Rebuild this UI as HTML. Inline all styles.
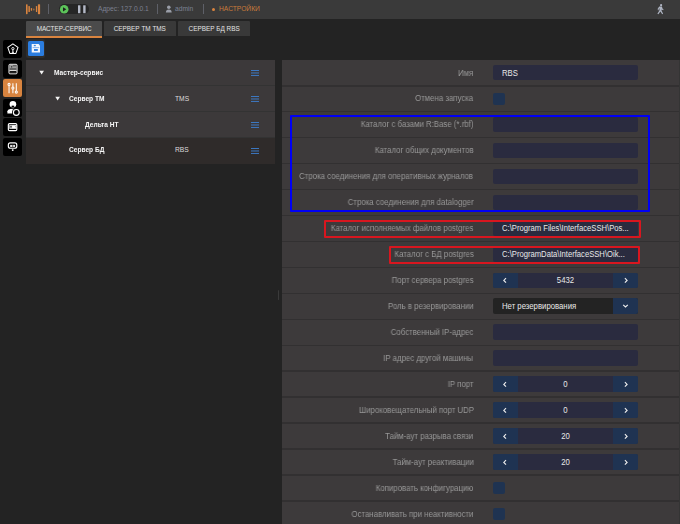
<!DOCTYPE html><html><head><meta charset="utf-8"><style>
*{margin:0;padding:0;box-sizing:border-box}
html,body{width:680px;height:524px;overflow:hidden;background:#232323;font-family:"Liberation Sans",sans-serif}
.a{position:absolute}
#hdr{left:0;top:0;width:680px;height:19px;background:#3a3a3a}
.sep{width:1px;background:#5e6068;top:4px;height:10px}
.htx{font-size:6.7px;line-height:19px;top:-1px;white-space:nowrap}
.tab{top:21px;height:15px;font-size:6.4px;line-height:15px;color:#e4e4e4;text-align:center;border-radius:1px 1px 0 0;white-space:nowrap}
.sb{left:2.5px;width:19.5px;height:18px;background:#000;border-radius:2px}
.sb svg{position:absolute;left:0;top:0}
.tr{left:26px;width:248.5px;height:26px;background:#3c3c3c}
.tt{font-size:6.6px;font-weight:bold;color:#f6f6f6;white-space:nowrap;will-change:transform}
.tv{font-size:6.7px;color:#dcdcdc;white-space:nowrap}
.ham{width:8px;height:6px}
.row{left:282px;width:397px;background:#3d3a3b}
.rs{left:282px;width:397px;height:1.5px;background:#323031}
.lb{right:206.5px;font-size:8.4px;color:#989898;will-change:transform;white-space:nowrap;text-align:right;transform:scaleX(0.935);transform-origin:100% 50%}
.inp{left:493px;width:145px;height:15.5px;background:#2a2b3f;border-radius:2px}
.val{font-size:8.3px;color:#e8e8e8;white-space:nowrap;transform:scaleX(0.935);transform-origin:0 50%}
.chk{left:493px;width:11.6px;height:11.7px;background:#1f3351;border-radius:2px}
.btn{width:25px;height:15.5px;background:#1f3352}
</style></head><body>
<div id="hdr" class="a"></div>
<svg class="a" style="left:24px;top:2px" width="18" height="14" viewBox="0 0 18 14">
<g fill="#d9843f">
<rect x="2" y="2.2" width="1.6" height="10" rx="0.6"/>
<rect x="4.4" y="4" width="1.5" height="6.1" rx="0.6"/>
<rect x="6.8" y="5.9" width="1.3" height="2.9" rx="0.6"/>
<rect x="9" y="6.4" width="1.6" height="2" rx="0.6" opacity="0.6"/>
<rect x="11.9" y="4" width="1.3" height="6.1" rx="0.6"/>
<rect x="13.9" y="2.2" width="2.2" height="10" rx="0.6"/>
</g></svg>
<div class="a sep" style="left:48px"></div>
<div class="a" style="left:58.5px;top:4px;width:30.8px;height:10.2px;border-radius:5.1px;background:#262626"></div>
<svg class="a" style="left:58px;top:3px" width="32" height="12" viewBox="0 0 32 12"><circle cx="6.2" cy="6.3" r="4.3" fill="#5cc35a"/><path d="M5 4.2 L8.3 6.3 L5 8.4 Z" fill="#1e1e1e"/><rect x="20" y="2.3" width="2.4" height="7.9" fill="#b3b8c6"/><rect x="25.2" y="2.3" width="2.4" height="7.9" fill="#b3b8c6"/></svg>
<div class="a htx" style="left:98px;color:#7c8090">Адрес: 127.0.0.1</div>
<div class="a sep" style="left:157px"></div>
<svg class="a" style="left:165px;top:5px" width="8" height="9" viewBox="0 0 8 9"><circle cx="3.8" cy="2.3" r="1.8" fill="#9a9ea8"/><path d="M0.9 7.6 Q0.9 4.6 3.8 4.6 Q6.7 4.6 6.7 7.6 Z" fill="#9a9ea8"/></svg>
<div class="a htx" style="left:175px;color:#7c8496">admin</div>
<div class="a sep" style="left:203px"></div>
<div class="a" style="left:212.3px;top:7.8px;width:3px;height:3px;border-radius:50%;background:#d9843f"></div>
<div class="a htx" style="left:219px;color:#c97a3b">НАСТРОЙКИ</div>
<svg class="a" style="left:655px;top:3px" width="10" height="13" viewBox="0 0 10 13"><g fill="#aeb4c2"><circle cx="6.1" cy="2.2" r="1.1"/><path d="M4.3 3.5 L6.9 3.5 L7.5 5.6 L8.6 6.5 L8.1 7.2 L6.7 6.4 L6.5 7.6 L8.1 10.8 L7.2 11.3 L5.4 8.4 L3.4 11.3 L2.4 10.8 L4.4 7.4 L4.5 5.3 L3.7 6 L3.7 7.3 L2.8 7.3 L2.8 5.5 Z"/></g></svg>
<div class="a tab" style="left:26px;width:76.3px;background:#4b4b4b">МАСТЕР-СЕРВИС</div>
<div class="a" style="left:26px;top:36px;width:76.3px;height:2px;background:#d9843f"></div>
<div class="a tab" style="left:103.8px;width:72px;background:#393939">СЕРВЕР ТМ TMS</div>
<div class="a tab" style="left:178.4px;width:71.5px;background:#393939">СЕРВЕР БД RBS</div>
<div class="a sb" style="top:40px;background:#000"></div>
<svg class="a" style="left:2.5px;top:40px" width="20" height="18" viewBox="2.5 40 20 18"><path d="M12.4 43.9 L17.5 47.4 L15.4 53.4 L9.4 53.4 L7.3 47.4 Z" fill="none" stroke="#fff" stroke-width="1.05" stroke-linejoin="round"/><circle cx="12.4" cy="48.6" r="1.15" fill="none" stroke="#fff" stroke-width="0.9"/><path d="M12.4 49.8 V52.3" stroke="#fff" stroke-width="1"/><path d="M11.3 52.4 H13.5" stroke="#fff" stroke-width="0.9"/></svg>
<div class="a sb" style="top:59.5px;background:#000"></div>
<svg class="a" style="left:2.5px;top:59.5px" width="20" height="18" viewBox="2.5 59.5 20 18"><rect x="8.5" y="63.8" width="8" height="9.5" rx="0.9" fill="none" stroke="#fff" stroke-width="1"/><rect x="9" y="64.3" width="7" height="6" fill="#9c9c9c"/><path d="M9 70.1 H16" stroke="#fff" stroke-width="0.8"/><circle cx="11.2" cy="66.3" r="0.65" fill="#000"/><path d="M12.4 65.3 H15.6" stroke="#111" stroke-width="0.6"/><path d="M9.3 68.5 H15.7" stroke="#000" stroke-width="0.7"/><rect x="9.4" y="71.4" width="6.2" height="1.3" fill="#222"/></svg>
<div class="a sb" style="top:79px;background:#d8843f"></div>
<svg class="a" style="left:2.5px;top:79px" width="20" height="18" viewBox="2.5 79 20 18"><g stroke="#fff" stroke-width="1.05" fill="none"><path d="M8.55 85.6 V93.3"/><circle cx="8.55" cy="84.4" r="1.05"/><path d="M12.4 83.2 V86.9 M12.4 89.1 V93.3"/><circle cx="12.4" cy="88" r="1.05"/><path d="M15.8 83.2 V91"/><circle cx="15.8" cy="92.1" r="1.05"/></g></svg>
<div class="a sb" style="top:98.5px;background:#000"></div>
<svg class="a" style="left:2.5px;top:98.5px" width="20" height="18" viewBox="2.5 98.5 20 18"><circle cx="12.4" cy="103.7" r="3.3" fill="#fff"/><path d="M10.6 105.6 Q12.4 108.4 14.2 105.6 Q12.4 104.6 10.6 105.6 Z" fill="#000"/><path d="M6.9 113 L6.9 110.8 Q7.1 108.6 9.6 108.4 L13.4 108.2 L13.4 113 Z" fill="#fff"/><circle cx="15.8" cy="111.9" r="4.3" fill="#000"/><circle cx="15.8" cy="111.9" r="2.9" fill="none" stroke="#fff" stroke-width="1.15"/></svg>
<div class="a sb" style="top:118px;background:#000"></div>
<svg class="a" style="left:2.5px;top:118px" width="20" height="18" viewBox="2.5 118 20 18"><rect x="7.85" y="123.6" width="8.45" height="7" rx="1.2" fill="none" stroke="#fff" stroke-width="1.15"/><rect x="9" y="125.1" width="6.9" height="3.7" fill="#fff"/><rect x="9" y="125.1" width="2.6" height="3.7" fill="#bbb"/><ellipse cx="10.5" cy="126.8" rx="0.55" ry="0.8" fill="#000"/><rect x="15.1" y="126.2" width="0.5" height="1" fill="#333"/></svg>
<div class="a sb" style="top:137.8px;background:#000"></div>
<svg class="a" style="left:2.5px;top:137.8px" width="20" height="18" viewBox="2.5 137.8 20 18"><rect x="7.85" y="142.7" width="8.45" height="5.4" rx="2" fill="none" stroke="#fff" stroke-width="1.15"/><rect x="9.6" y="144.6" width="5" height="2.4" fill="#777"/><circle cx="10.6" cy="145.8" r="0.9" fill="#fff"/><circle cx="13.6" cy="145.8" r="0.9" fill="#fff"/><rect x="11.4" y="149.1" width="1.6" height="1.6" fill="#fff"/></svg>
<div class="a" style="left:26px;top:39px;width:19px;height:19px;background:#2e2e2e;border-radius:2px"></div>
<div class="a" style="left:28px;top:40.7px;width:15.7px;height:15.5px;background:#2b7ddf;border-radius:1.5px"></div>
<svg class="a" style="left:28px;top:40px" width="16" height="17" viewBox="28 40 16 17"><path d="M31.7 44 H38.6 L40 45.4 V52.4 H31.7 Z" fill="#f2f6fc"/><rect x="33.8" y="44.9" width="2" height="1.3" fill="#3a86e0"/><path d="M32.6 47.6 H39.2" stroke="#5b9ae6" stroke-width="0.7"/><rect x="34" y="49" width="3.8" height="1.9" fill="#2b7ddf"/></svg>
<div class="a tr" style="top:60.0px;height:25.95px;background:#3c393a"></div>
<div class="a" style="left:26px;width:248.5px;top:85.0px;height:1.3px;background:#333"></div>
<svg class="a" style="left:38.9px;top:70.0px" width="6" height="5" viewBox="0 0 6 5"><path d="M0.3 0.8 H5 L2.65 4.4 Z" fill="#f4f4f4"/></svg>
<div class="a tt" style="left:54px;top:67.6px;line-height:10px">Мастер-сервис</div>
<svg class="a" style="left:250px;top:60.0px" width="10" height="26" viewBox="250 60.0 10 26"><g fill="#3d7cc9"><rect x="251" y="70.05" width="8" height="0.95"/><rect x="251" y="72.50" width="8" height="0.95"/><rect x="251" y="74.95" width="8" height="0.95"/></g></svg>
<div class="a tr" style="top:85.95px;height:25.95px;background:#3c393a"></div>
<div class="a" style="left:26px;width:248.5px;top:110.95px;height:1.3px;background:#333"></div>
<svg class="a" style="left:54.9px;top:95.95px" width="6" height="5" viewBox="0 0 6 5"><path d="M0.3 0.8 H5 L2.65 4.4 Z" fill="#f4f4f4"/></svg>
<div class="a tt" style="left:69.2px;top:93.55px;line-height:10px">Сервер ТМ</div>
<div class="a tv" style="left:175px;top:93.55px;line-height:10px">TMS</div>
<svg class="a" style="left:250px;top:85.95px" width="10" height="26" viewBox="250 85.95 10 26"><g fill="#3d7cc9"><rect x="251" y="96.00" width="8" height="0.95"/><rect x="251" y="98.45" width="8" height="0.95"/><rect x="251" y="100.90" width="8" height="0.95"/></g></svg>
<div class="a tr" style="top:111.9px;height:25.95px;background:#3c393a"></div>
<div class="a" style="left:26px;width:248.5px;top:136.9px;height:1.3px;background:#333"></div>
<div class="a tt" style="left:85.3px;top:119.5px;line-height:10px">Дельта НТ</div>
<svg class="a" style="left:250px;top:111.9px" width="10" height="26" viewBox="250 111.9 10 26"><g fill="#3d7cc9"><rect x="251" y="121.95" width="8" height="0.95"/><rect x="251" y="124.40" width="8" height="0.95"/><rect x="251" y="126.85" width="8" height="0.95"/></g></svg>
<div class="a tr" style="top:137.85px;height:25.8px;background:#2f2b2a"></div>
<div class="a tt" style="left:69.2px;top:145.45px;line-height:10px">Сервер БД</div>
<div class="a tv" style="left:175px;top:145.45px;line-height:10px">RBS</div>
<svg class="a" style="left:250px;top:137.85px" width="10" height="26" viewBox="250 137.85 10 26"><g fill="#3d7cc9"><rect x="251" y="147.90" width="8" height="0.95"/><rect x="251" y="150.35" width="8" height="0.95"/><rect x="251" y="152.80" width="8" height="0.95"/></g></svg>
<div class="a" style="left:277.8px;top:289.5px;width:1.6px;height:10px;background:#3a3a3a;border-radius:1px"></div>
<div class="a row" style="top:60px;height:464px"></div>
<div class="a" style="left:679px;top:60px;width:1px;height:464px;background:#343434"></div>
<div class="a rs" style="top:85.00px"></div>
<div class="a lb" style="top:67.50px;line-height:10px">Имя</div>
<div class="a inp" style="top:64.90px"></div>
<div class="a val" style="left:502px;top:67.60px;line-height:10px">RBS</div>
<div class="a rs" style="top:110.95px"></div>
<div class="a lb" style="top:93.45px;line-height:10px">Отмена запуска</div>
<div class="a chk" style="top:92.85px"></div>
<div class="a rs" style="top:136.90px"></div>
<div class="a lb" style="top:119.40px;line-height:10px">Каталог с базами R:Base (*.rbf)</div>
<div class="a inp" style="top:116.80px"></div>
<div class="a rs" style="top:162.85px"></div>
<div class="a lb" style="top:145.35px;line-height:10px">Каталог общих документов</div>
<div class="a inp" style="top:142.75px"></div>
<div class="a rs" style="top:188.80px"></div>
<div class="a lb" style="top:171.30px;line-height:10px">Строка соединения для оперативных журналов</div>
<div class="a inp" style="top:168.70px"></div>
<div class="a rs" style="top:214.75px"></div>
<div class="a lb" style="top:197.25px;line-height:10px">Строка соединения для datalogger</div>
<div class="a inp" style="top:194.65px"></div>
<div class="a rs" style="top:240.70px"></div>
<div class="a lb" style="top:223.20px;line-height:10px">Каталог исполняемых файлов postgres</div>
<div class="a inp" style="top:220.60px"></div>
<div class="a val" style="left:502px;top:223.30px;line-height:10px;transform:scaleX(0.922)">C:\Program Files\InterfaceSSH\Pos...</div>
<div class="a rs" style="top:266.65px"></div>
<div class="a lb" style="top:249.15px;line-height:10px">Каталог с БД postgres</div>
<div class="a inp" style="top:246.55px"></div>
<div class="a val" style="left:502px;top:249.25px;line-height:10px;transform:scaleX(0.922)">C:\ProgramData\InterfaceSSH\Oik...</div>
<div class="a rs" style="top:292.60px"></div>
<div class="a lb" style="top:275.10px;line-height:10px">Порт сервера postgres</div>
<div class="a inp" style="top:272.50px"></div>
<div class="a btn" style="left:493px;top:272.50px;border-radius:2px 0 0 2px"></div>
<div class="a btn" style="left:613px;top:272.50px;border-radius:0 2px 2px 0"></div>
<svg class="a" style="left:502px;top:277.00px" width="6" height="7" viewBox="0 0 6 7"><path d="M4 1.1 L1.8 3.4 L4 5.7" fill="none" stroke="#eeeeee" stroke-width="1.15"/></svg>
<svg class="a" style="left:623px;top:277.00px" width="6" height="7" viewBox="0 0 6 7"><path d="M1.9 1.1 L4.1 3.4 L1.9 5.7" fill="none" stroke="#eeeeee" stroke-width="1.15"/></svg>
<div class="a val" style="left:518px;width:95px;text-align:center;top:275.20px;line-height:10px;transform-origin:50% 50%">5432</div>
<div class="a rs" style="top:318.55px"></div>
<div class="a lb" style="top:301.05px;line-height:10px">Роль в резервировании</div>
<div class="a inp" style="top:298.45px;background:#232323"></div>
<div class="a btn" style="left:613px;top:298.45px;border-radius:0 2px 2px 0"></div>
<svg class="a" style="left:622px;top:303.45px" width="7" height="6" viewBox="0 0 7 6"><path d="M1.2 1.8 L3.5 4 L5.8 1.8" fill="none" stroke="#eeeeee" stroke-width="1.15"/></svg>
<div class="a val" style="left:502px;top:301.15px;line-height:10px">Нет резервирования</div>
<div class="a rs" style="top:344.50px"></div>
<div class="a lb" style="top:327.00px;line-height:10px">Собственный IP-адрес</div>
<div class="a inp" style="top:324.40px"></div>
<div class="a rs" style="top:370.45px"></div>
<div class="a lb" style="top:352.95px;line-height:10px">IP адрес другой машины</div>
<div class="a inp" style="top:350.35px"></div>
<div class="a rs" style="top:396.40px"></div>
<div class="a lb" style="top:378.90px;line-height:10px">IP порт</div>
<div class="a inp" style="top:376.30px"></div>
<div class="a btn" style="left:493px;top:376.30px;border-radius:2px 0 0 2px"></div>
<div class="a btn" style="left:613px;top:376.30px;border-radius:0 2px 2px 0"></div>
<svg class="a" style="left:502px;top:380.80px" width="6" height="7" viewBox="0 0 6 7"><path d="M4 1.1 L1.8 3.4 L4 5.7" fill="none" stroke="#eeeeee" stroke-width="1.15"/></svg>
<svg class="a" style="left:623px;top:380.80px" width="6" height="7" viewBox="0 0 6 7"><path d="M1.9 1.1 L4.1 3.4 L1.9 5.7" fill="none" stroke="#eeeeee" stroke-width="1.15"/></svg>
<div class="a val" style="left:518px;width:95px;text-align:center;top:379.00px;line-height:10px;transform-origin:50% 50%">0</div>
<div class="a rs" style="top:422.35px"></div>
<div class="a lb" style="top:404.85px;line-height:10px">Широковещательный порт UDP</div>
<div class="a inp" style="top:402.25px"></div>
<div class="a btn" style="left:493px;top:402.25px;border-radius:2px 0 0 2px"></div>
<div class="a btn" style="left:613px;top:402.25px;border-radius:0 2px 2px 0"></div>
<svg class="a" style="left:502px;top:406.75px" width="6" height="7" viewBox="0 0 6 7"><path d="M4 1.1 L1.8 3.4 L4 5.7" fill="none" stroke="#eeeeee" stroke-width="1.15"/></svg>
<svg class="a" style="left:623px;top:406.75px" width="6" height="7" viewBox="0 0 6 7"><path d="M1.9 1.1 L4.1 3.4 L1.9 5.7" fill="none" stroke="#eeeeee" stroke-width="1.15"/></svg>
<div class="a val" style="left:518px;width:95px;text-align:center;top:404.95px;line-height:10px;transform-origin:50% 50%">0</div>
<div class="a rs" style="top:448.30px"></div>
<div class="a lb" style="top:430.80px;line-height:10px">Тайм-аут разрыва связи</div>
<div class="a inp" style="top:428.20px"></div>
<div class="a btn" style="left:493px;top:428.20px;border-radius:2px 0 0 2px"></div>
<div class="a btn" style="left:613px;top:428.20px;border-radius:0 2px 2px 0"></div>
<svg class="a" style="left:502px;top:432.70px" width="6" height="7" viewBox="0 0 6 7"><path d="M4 1.1 L1.8 3.4 L4 5.7" fill="none" stroke="#eeeeee" stroke-width="1.15"/></svg>
<svg class="a" style="left:623px;top:432.70px" width="6" height="7" viewBox="0 0 6 7"><path d="M1.9 1.1 L4.1 3.4 L1.9 5.7" fill="none" stroke="#eeeeee" stroke-width="1.15"/></svg>
<div class="a val" style="left:518px;width:95px;text-align:center;top:430.90px;line-height:10px;transform-origin:50% 50%">20</div>
<div class="a rs" style="top:474.25px"></div>
<div class="a lb" style="top:456.75px;line-height:10px">Тайм-аут реактивации</div>
<div class="a inp" style="top:454.15px"></div>
<div class="a btn" style="left:493px;top:454.15px;border-radius:2px 0 0 2px"></div>
<div class="a btn" style="left:613px;top:454.15px;border-radius:0 2px 2px 0"></div>
<svg class="a" style="left:502px;top:458.65px" width="6" height="7" viewBox="0 0 6 7"><path d="M4 1.1 L1.8 3.4 L4 5.7" fill="none" stroke="#eeeeee" stroke-width="1.15"/></svg>
<svg class="a" style="left:623px;top:458.65px" width="6" height="7" viewBox="0 0 6 7"><path d="M1.9 1.1 L4.1 3.4 L1.9 5.7" fill="none" stroke="#eeeeee" stroke-width="1.15"/></svg>
<div class="a val" style="left:518px;width:95px;text-align:center;top:456.85px;line-height:10px;transform-origin:50% 50%">20</div>
<div class="a rs" style="top:500.20px"></div>
<div class="a lb" style="top:482.70px;line-height:10px">Копировать конфигурацию</div>
<div class="a chk" style="top:482.10px"></div>
<div class="a rs" style="top:526.15px"></div>
<div class="a lb" style="top:508.65px;line-height:10px">Останавливать при неактивности</div>
<div class="a chk" style="top:508.05px"></div>
<div class="a" style="left:290.3px;top:115.3px;width:359.8px;height:96.6px;border:2px solid #0000f5;border-radius:1px"></div>
<div class="a" style="left:323.8px;top:220.3px;width:317.5px;height:17.3px;border:2px solid #d8161f;border-radius:1px"></div>
<div class="a" style="left:389.3px;top:246.2px;width:250.8px;height:17.5px;border:2px solid #d8161f;border-radius:1px"></div>
</body></html>
